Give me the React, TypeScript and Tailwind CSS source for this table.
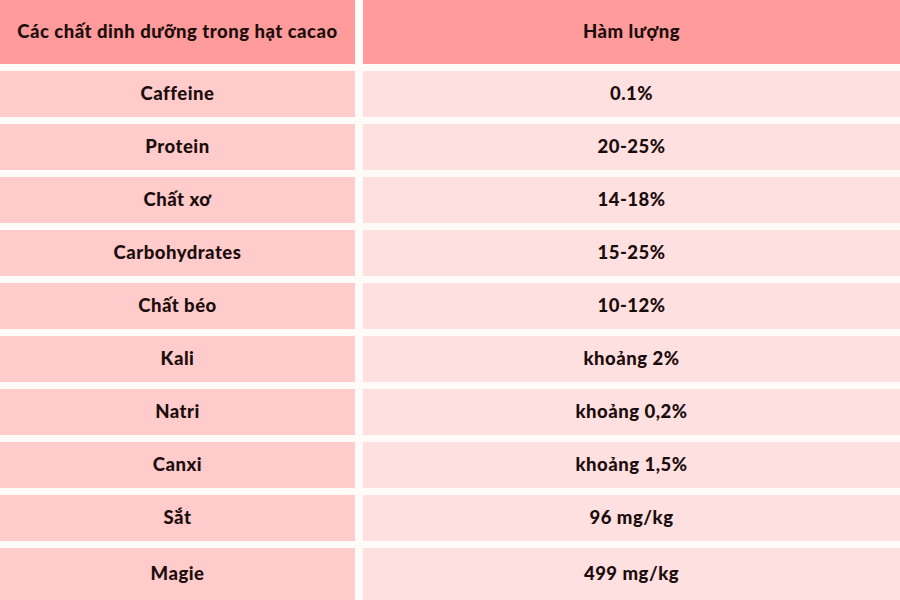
import { Fragment } from "react";

const rows: [string, string][] = [
  ["Caffeine", "0.1%"],
  ["Protein", "20-25%"],
  ["Chất xơ", "14-18%"],
  ["Carbohydrates", "15-25%"],
  ["Chất béo", "10-12%"],
  ["Kali", "khoảng 2%"],
  ["Natri", "khoảng 0,2%"],
  ["Canxi", "khoảng 1,5%"],
  ["Sắt", "96 mg/kg"],
  ["Magie", "499 mg/kg"],
];

export default function App() {
  return (
    <div
      className="w-[900px] h-[600px] bg-[#fffbf8] grid grid-cols-[355px_537px] gap-x-[8px] gap-y-[7px] grid-rows-[64px_repeat(9,46px)_1fr] text-[18.5px] font-black tracking-[0.5px] text-[#1c0d0d] overflow-hidden"
      style={{ fontFamily: "Lato, 'Noto Sans', sans-serif" }}
    >
      <div className="bg-[#ff9b9b] flex items-center justify-center">
        Các chất dinh dưỡng trong hạt cacao
      </div>
      <div className="bg-[#ff9b9b] flex items-center justify-center">Hàm lượng</div>
      {rows.map(([name, value]) => (
        <Fragment key={name}>
          <div className="bg-[#ffcbcb] flex items-center justify-center">{name}</div>
          <div className="bg-[#ffe0e0] flex items-center justify-center">{value}</div>
        </Fragment>
      ))}
    </div>
  );
}
